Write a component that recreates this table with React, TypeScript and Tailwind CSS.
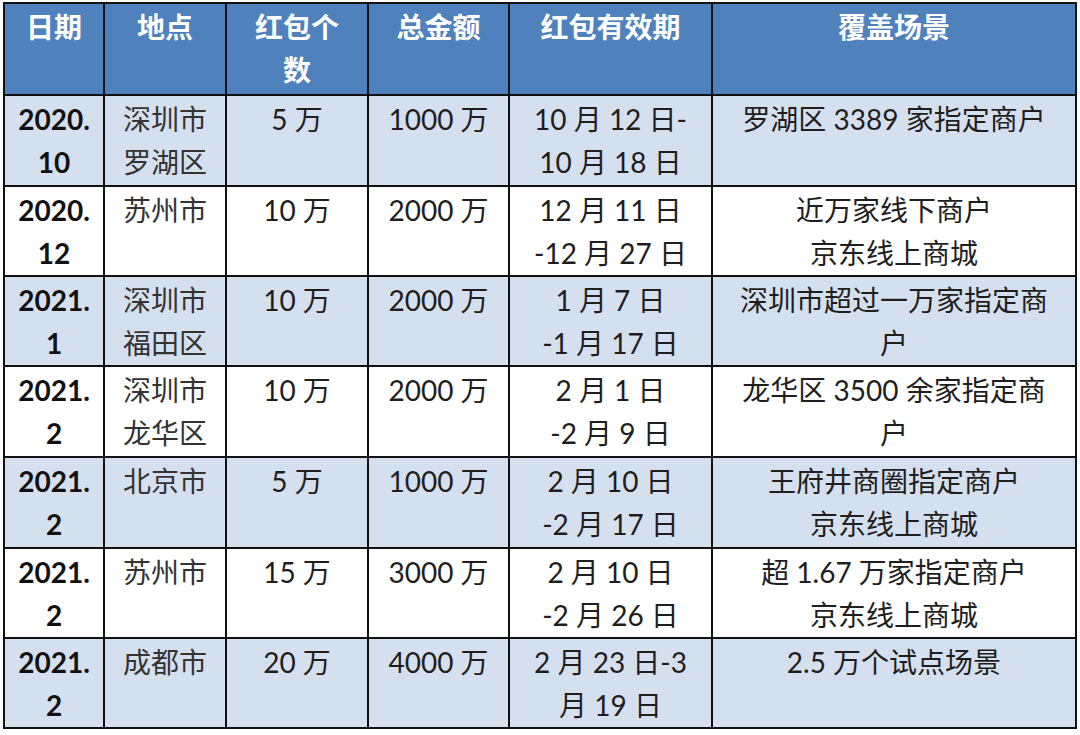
import React from "react";

type Row = {
  date: [string, string];
  place: string[];
  count: string;
  amount: string;
  period: string[];
  scene: string[];
  h: string;
};

const rows: Row[] = [
  { date: ["2020.", "10"], place: ["深圳市", "罗湖区"], count: "5 万", amount: "1000 万", period: ["10 月 12 日-", "10 月 18 日"], scene: ["罗湖区 3389 家指定商户"], h: "h-[91px]" },
  { date: ["2020.", "12"], place: ["苏州市"], count: "10 万", amount: "2000 万", period: ["12 月 11 日", "-12 月 27 日"], scene: ["近万家线下商户", "京东线上商城"], h: "h-[90px]" },
  { date: ["2021.", "1"], place: ["深圳市", "福田区"], count: "10 万", amount: "2000 万", period: ["1 月 7 日", "-1 月 17 日"], scene: ["深圳市超过一万家指定商", "户"], h: "h-[90px]" },
  { date: ["2021.", "2"], place: ["深圳市", "龙华区"], count: "10 万", amount: "2000 万", period: ["2 月 1 日", "-2 月 9 日"], scene: ["龙华区 3500 余家指定商", "户"], h: "h-[91px]" },
  { date: ["2021.", "2"], place: ["北京市"], count: "5 万", amount: "1000 万", period: ["2 月 10 日", "-2 月 17 日"], scene: ["王府井商圈指定商户", "京东线上商城"], h: "h-[91px]" },
  { date: ["2021.", "2"], place: ["苏州市"], count: "15 万", amount: "3000 万", period: ["2 月 10 日", "-2 月 26 日"], scene: ["超 1.67 万家指定商户", "京东线上商城"], h: "h-[90px]" },
  { date: ["2021.", "2"], place: ["成都市"], count: "20 万", amount: "4000 万", period: ["2 月 23 日-3", "月 19 日"], scene: ["2.5 万个试点场景"], h: "h-[90px]" },
];

const Lines = ({ items }: { items: string[] }) => (
  <>
    {items.map((t, i) => (
      <div key={i}>{t}</div>
    ))}
  </>
);

const td = "border-2 border-[#111] align-top text-center p-0 px-1 pt-[2px]";

const App = () => {
  return (
    <div
      className="bg-white w-[1080px] h-[735px] pt-[2px] pl-[3px] text-[28px] leading-[43px] text-[#1e1e1e]"
      style={{ fontFamily: 'Lato, "Noto Sans CJK SC", sans-serif' }}
    >
      <table className="border-collapse table-fixed w-[1072px]">
        <colgroup>
          <col className="w-[100px]" />
          <col className="w-[122px]" />
          <col className="w-[142px]" />
          <col className="w-[141px]" />
          <col className="w-[203px]" />
          <col className="w-[364px]" />
        </colgroup>
        <thead>
          <tr className="h-[92px] bg-[#4f81bd] text-white font-bold">
            <th className={td}>日期</th>
            <th className={td}>地点</th>
            <th className={td}>
              <div>红包个</div>
              <div>数</div>
            </th>
            <th className={td}>总金额</th>
            <th className={td}>红包有效期</th>
            <th className={td}>覆盖场景</th>
          </tr>
        </thead>
        <tbody>
          {rows.map((r, i) => (
            <tr key={i} className={`${r.h} ${i % 2 === 0 ? "bg-[#d5e0ef]" : "bg-white"}`}>
              <td className={`${td} font-bold text-[#111]`}>
                <Lines items={r.date} />
              </td>
              <td className={`${td} text-[#333]`}>
                <Lines items={r.place} />
              </td>
              <td className={td}>{r.count}</td>
              <td className={td}>{r.amount}</td>
              <td className={td}>
                <Lines items={r.period} />
              </td>
              <td className={td}>
                <Lines items={r.scene} />
              </td>
            </tr>
          ))}
        </tbody>
      </table>
    </div>
  );
};

export default App;
